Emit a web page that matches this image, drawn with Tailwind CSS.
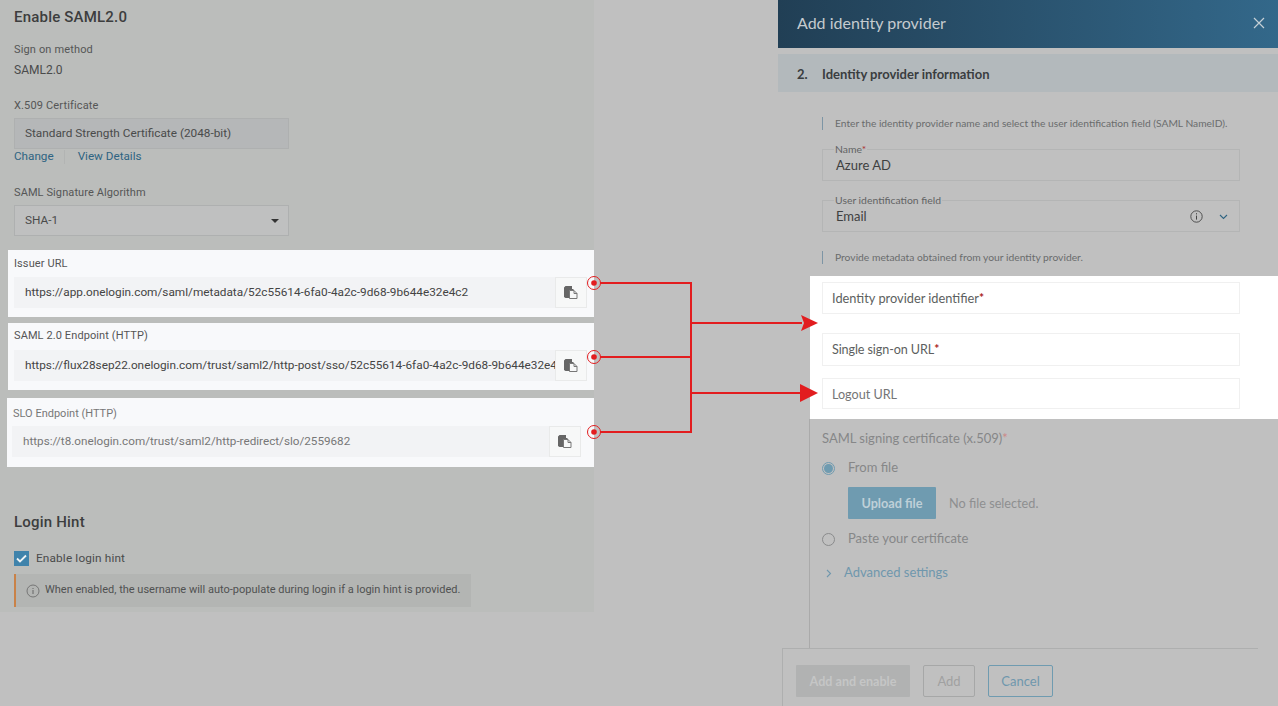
<!DOCTYPE html>
<html lang="en">
<head>
    <meta charset="UTF-8">
    <title>Enable SAML2.0</title>
    <script src="https://cdn.jsdelivr.net/npm/@tailwindcss/browser@4"></script>
</head>
<body>
    <div class="relative flex w-[1278px] h-[706px] overflow-hidden bg-[#c0c0c0]">
        <!-- left: onelogin settings -->
        <div class="w-[594px] h-[612px] shrink-0 bg-[#bbbdbb] font-['Roboto',sans-serif] text-[#4a4b4b]">
            <div class="px-[14px]">
                <h2 class="pt-[7px] text-[15px] leading-[20px] font-medium tracking-[0.2px] text-[#3d3e3e]">Enable SAML2.0</h2>
                <p class="mt-[14px] text-[11px] leading-[18px] tracking-[0.15px] text-[#555656]">Sign on method</p>
                <p class="mt-[2px] text-[12px] leading-[18px] text-[#4a4b4b]">SAML2.0</p>
                <p class="mt-[18px] text-[11px] leading-[18px] tracking-[0.15px] text-[#555656]">X.509 Certificate</p>
                <div class="mt-[3px] flex items-center w-[275px] h-[31px] px-[10px] bg-[#b5b7b8] border border-[#aeb0b0] text-[11.8px]">Standard Strength Certificate (2048-bit)</div>
                <div class="flex items-center h-[15px] text-[11.7px] text-[#2f6482]">
                    <span>Change</span>
                    <span class="w-px h-[14px] ml-[10px] mr-[13px] bg-[#b2b4b3]"></span>
                    <span>View Details</span>
                </div>
                <p class="mt-[20px] text-[11px] leading-[18px] tracking-[0.1px] text-[#555656]">SAML Signature Algorithm</p>
                <div class="mt-[3px] flex items-center justify-between w-[275px] h-[31px] pl-[10px] pr-[9px] bg-[#bfc0c0] border border-[#aeb0b0] text-[11.8px]">
                    <span>SHA-1</span>
                    <span class="w-0 h-0 border-x-[4px] border-x-transparent border-t-[4px] border-t-[#333]"></span>
                </div>
            </div>

            <div class="mt-[14px] h-[67px] ml-[8px] pl-[6px] pr-[7px] bg-[#f8f9fb]">
                <p class="pt-[5px] text-[11px] leading-[18px] tracking-[0.1px] text-[#555]">Issuer URL</p>
                <div class="mt-[4px] flex h-[31px]">
                    <div class="flex-1 min-w-0 flex items-center pl-[11px] bg-[#f2f3f5] text-[11.8px] whitespace-nowrap text-[#444]">https://app.onelogin.com/saml/metadata/52c55614-6fa0-4a2c-9d68-9b644e32e4c2</div>
                    <div class="w-[32px] flex items-center justify-center bg-[#f7f8f8] border border-[#e9eaea]">
                        <svg width="14" height="13" viewBox="0 0 14 13"><path d="M0 1.5 1.5 0H8v3h1.5V12H1.5L0 11z" fill="#666"/><path d="M5.5 4.5H10l3 3v5H5.5z" fill="#f7f8f8" stroke="#777" stroke-width="1"/><path d="M10 4.5v3h3" fill="none" stroke="#777"/></svg>
                    </div>
                </div>
            </div>

            <div class="mt-[6px] h-[67px] ml-[8px] pl-[6px] pr-[7px] bg-[#f8f9fb]">
                <p class="pt-[4px] text-[11px] leading-[18px] tracking-[0.1px] text-[#555]">SAML 2.0 Endpoint (HTTP)</p>
                <div class="mt-[5px] flex h-[31px]">
                    <div class="flex-1 min-w-0 flex items-center pl-[11px] bg-[#f2f3f5] text-[11.8px] whitespace-nowrap text-[#444]">https://flux28sep22.onelogin.com/trust/saml2/http-post/sso/52c55614-6fa0-4a2c-9d68-9b644e32e4</div>
                    <div class="w-[32px] flex items-center justify-center bg-[#f7f8f8] border border-[#e9eaea]">
                        <svg width="14" height="13" viewBox="0 0 14 13"><path d="M0 1.5 1.5 0H8v3h1.5V12H1.5L0 11z" fill="#666"/><path d="M5.5 4.5H10l3 3v5H5.5z" fill="#f7f8f8" stroke="#777" stroke-width="1"/><path d="M10 4.5v3h3" fill="none" stroke="#777"/></svg>
                    </div>
                </div>
            </div>

            <div class="mt-[8px] h-[69px] ml-[7px] pl-[5px] pr-[13px] bg-[#f8f9fb]">
                <p class="pt-[7px] pl-px text-[11px] leading-[18px] text-[#777]">SLO Endpoint (HTTP)</p>
                <div class="mt-[3px] flex h-[31px]">
                    <div class="flex-1 min-w-0 flex items-center pl-[11px] bg-[#f2f3f5] text-[11.7px] whitespace-nowrap text-[#777]">https://t8.onelogin.com/trust/saml2/http-redirect/slo/2559682</div>
                    <div class="w-[32px] flex items-center justify-center bg-[#f7f8f8] border border-[#e9eaea]">
                        <svg width="14" height="13" viewBox="0 0 14 13"><path d="M0 1.5 1.5 0H8v3h1.5V12H1.5L0 11z" fill="#666"/><path d="M5.5 4.5H10l3 3v5H5.5z" fill="#f7f8f8" stroke="#777" stroke-width="1"/><path d="M10 4.5v3h3" fill="none" stroke="#777"/></svg>
                    </div>
                </div>
            </div>

            <div class="px-[14px]">
                <h2 class="mt-[45px] text-[15px] leading-[20px] font-medium tracking-[0.2px] text-[#3d3e3e]">Login Hint</h2>
                <div class="mt-[19px] flex items-center h-[15px] gap-[7px] text-[11.8px] tracking-[0.15px]">
                    <span class="w-[15px] h-[15px] flex items-center justify-center bg-[#3f83ab]">
                        <svg width="11" height="9" viewBox="0 0 11 9"><path d="M1 4.5 4 7.5 10 1.5" fill="none" stroke="#eef3f5" stroke-width="1.8"/></svg>
                    </span>
                    <span>Enable login hint</span>
                </div>
                <div class="mt-[8px] flex items-center w-[457px] h-[33px] pl-[10px] gap-[5px] bg-[#b3b5b3] border-l-2 border-[#c98248] text-[11px] whitespace-nowrap text-[#505151]">
                    <svg width="14" height="14" viewBox="0 0 14 14" class="shrink-0"><circle cx="7" cy="7" r="6" fill="none" stroke="#666" stroke-width="0.8"/><path d="M7 6v4M7 4v1" stroke="#666" stroke-width="1"/></svg>
                    <span>When enabled, the username will auto-populate during login if a login hint is provided.</span>
                </div>
            </div>
        </div>

        <div class="w-[184px] shrink-0"></div>

        <!-- right: add identity provider drawer -->
        <div class="w-[500px] h-full shrink-0 flex flex-col font-['Lato',sans-serif]">
            <div class="h-[48px] shrink-0 flex items-center justify-between pl-[19px] pr-[13px] pb-[2px] bg-gradient-to-r from-[#213f55] to-[#33688a] text-[16px] text-[#c5cbcf]">
                <span>Add identity provider</span>
                <svg width="12" height="12" viewBox="0 0 12 12"><path d="M1 1 11 11M11 1 1 11" stroke="#c5d0d6" stroke-width="1.2"/></svg>
            </div>
            <div class="mt-[6px] h-[38px] shrink-0 flex items-center pl-[19px] pt-[3px] bg-[#b3b9bc] text-[13px] font-bold text-[#3a3d3f]">
                <span class="w-[25px]">2.</span>
                <span>Identity provider information</span>
            </div>

            <div class="h-[184px] shrink-0 pl-[44px] pr-[38px]">
                <p class="mt-[25px] h-[13px] flex items-center pl-[12px] border-l border-[#7d95a5] text-[10.22px] whitespace-nowrap text-[#6a6c6d]">Enter the identity provider name and select the user identification field (SAML NameID).</p>
                <div class="relative mt-[19px] h-[32px] flex items-center pl-[13px] pt-px border border-[#b4b5b5] text-[13px] text-[#3e3f40]">
                    <span class="absolute left-[11px] top-[-8px] px-[1px] bg-[#c0c0c0] text-[10.4px] leading-[14px] text-[#626364]">Name<span class="text-[#a33]">*</span></span>
                    Azure AD
                </div>
                <div class="relative mt-[19px] h-[32px] flex items-center justify-between pl-[13px] pr-[11px] pt-px border border-[#b4b5b5] text-[13px] text-[#3e3f40]">
                    <span class="absolute left-[11px] top-[-8px] px-[1px] bg-[#c0c0c0] text-[10.4px] leading-[14px] text-[#626364]">User identification field</span>
                    <span>Email</span>
                    <span class="flex items-center gap-[16px]">
                        <svg width="13" height="13" viewBox="0 0 13 13"><circle cx="6.5" cy="6.5" r="5.7" fill="none" stroke="#444" stroke-width="0.9"/><path d="M6.5 5.6v4M6.5 3.2v1.2" stroke="#444"/></svg>
                        <svg width="9" height="6" viewBox="0 0 9 6"><path d="M1 1 4.5 4.5 8 1" fill="none" stroke="#2f6482" stroke-width="1.1"/></svg>
                    </span>
                </div>
            </div>

            <div class="h-[13px] -mt-[25px] mb-[12px] ml-[44px] shrink-0 flex items-center pl-[12px] border-l border-[#7d95a5] text-[10.3px] whitespace-nowrap text-[#6a6c6d]">Provide metadata obtained from your identity provider.</div>

            <div class="h-[143px] shrink-0 ml-[32px] pl-[12px] pr-[38px] pt-[6px] bg-white text-[#5d5f60]">
                <div class="h-[32px] flex items-center pl-[9px] pt-[2px] border border-[#f0f0f0] text-[12.8px]">Identity provider identifier<span class="text-[#a22] font-bold self-start mt-[4px] text-[12px]">*</span></div>
                <div class="mt-[19px] h-[33px] flex items-center pl-[9px] pt-px border border-[#f0f0f0] text-[12.6px] tracking-[-0.1px]">Single sign-on URL<span class="text-[#a22] font-bold self-start mt-[5px] text-[12px]">*</span></div>
                <div class="mt-[12px] h-[31px] flex items-center pl-[9px] pt-[3px] border border-[#f0f0f0] text-[12.6px] text-[#747576]">Logout URL</div>
            </div>

            <div class="h-[229px] shrink-0 ml-[31px] pl-[12px] border-l border-[#aaa] text-[13px] text-[#868788]">
                <p class="mt-[10px] leading-[18px]">SAML signing certificate (x.509)<span class="text-[#c88]">*</span></p>
                <div class="mt-[12px] flex items-center h-[18px]">
                    <span class="w-[13px] h-[13px] rounded-full border border-[#6f9bb0] flex items-center justify-center"><span class="w-[9px] h-[9px] rounded-full bg-[#6f9bb0]"></span></span>
                    <span class="ml-[13px]">From file</span>
                </div>
                <div class="mt-[10px] ml-[26px] flex items-center h-[32px] text-[12.7px]">
                    <span class="w-[88px] h-full flex items-center justify-center pt-[2px] rounded-[1px] bg-[#6f9bb0] font-bold text-[#bfd0d8]">Upload file</span>
                    <span class="ml-[13px] pt-[2px] text-[#8e8f90]">No file selected.</span>
                </div>
                <div class="mt-[11px] flex items-center h-[18px]">
                    <span class="w-[13px] h-[13px] rounded-full border border-[#8a8b8c]"></span>
                    <span class="ml-[13px]">Paste your certificate</span>
                </div>
                <div class="mt-[16px] flex items-center h-[18px] text-[#6f97ad]">
                    <svg width="6" height="9" viewBox="0 0 6 9" class="ml-[4px]"><path d="M1 1 4.5 4.5 1 8" fill="none" stroke="#6f97ad" stroke-width="1.1"/></svg>
                    <span class="ml-[12px]">Advanced settings</span>
                </div>
            </div>

            <div class="flex-1 ml-[4px] mr-[20px] pl-[13px] pt-[16px] border-l border-t border-[#aeafaf] flex items-start text-[13px]">
                <span class="w-[114px] h-[32px] flex items-center justify-center pt-[2px] rounded-[1px] bg-[#b1b2b2] font-bold text-[12.6px] text-[#c5c6c6]">Add and enable</span>
                <span class="ml-[13px] w-[52px] h-[32px] flex items-center justify-center pt-px rounded-[2px] border border-[#a6a7a7] text-[#a0a1a1]">Add</span>
                <span class="ml-[13px] w-[65px] h-[32px] flex items-center justify-center pt-px rounded-[2px] border border-[#6f9bb0] text-[#6f97ad]">Cancel</span>
            </div>
        </div>

        <!-- red connectors drawn over the screenshot -->
        <svg class="absolute inset-0 pointer-events-none" width="1278" height="706" viewBox="0 0 1278 706">
            <g fill="none" stroke="#e21d1f" stroke-width="2">
                <path d="M600 283H691V432H600M600 357H691M691 323H802M691 393H802"/>
            </g>
            <g fill="none" stroke="#e21d1f" stroke-width="1">
                <circle cx="594" cy="283" r="6.5"/>
                <circle cx="594" cy="357" r="6.5"/>
                <circle cx="594" cy="432" r="6.5"/>
            </g>
            <g fill="#e21d1f">
                <circle cx="594" cy="283" r="2.8"/>
                <circle cx="594" cy="357" r="2.8"/>
                <circle cx="594" cy="432" r="2.8"/>
                <path d="M801 315 818 323 801 331 804 323z"/>
                <path d="M800 384 818 393 800 402z"/>
            </g>
        </svg>
    </div>
</body>
</html>
